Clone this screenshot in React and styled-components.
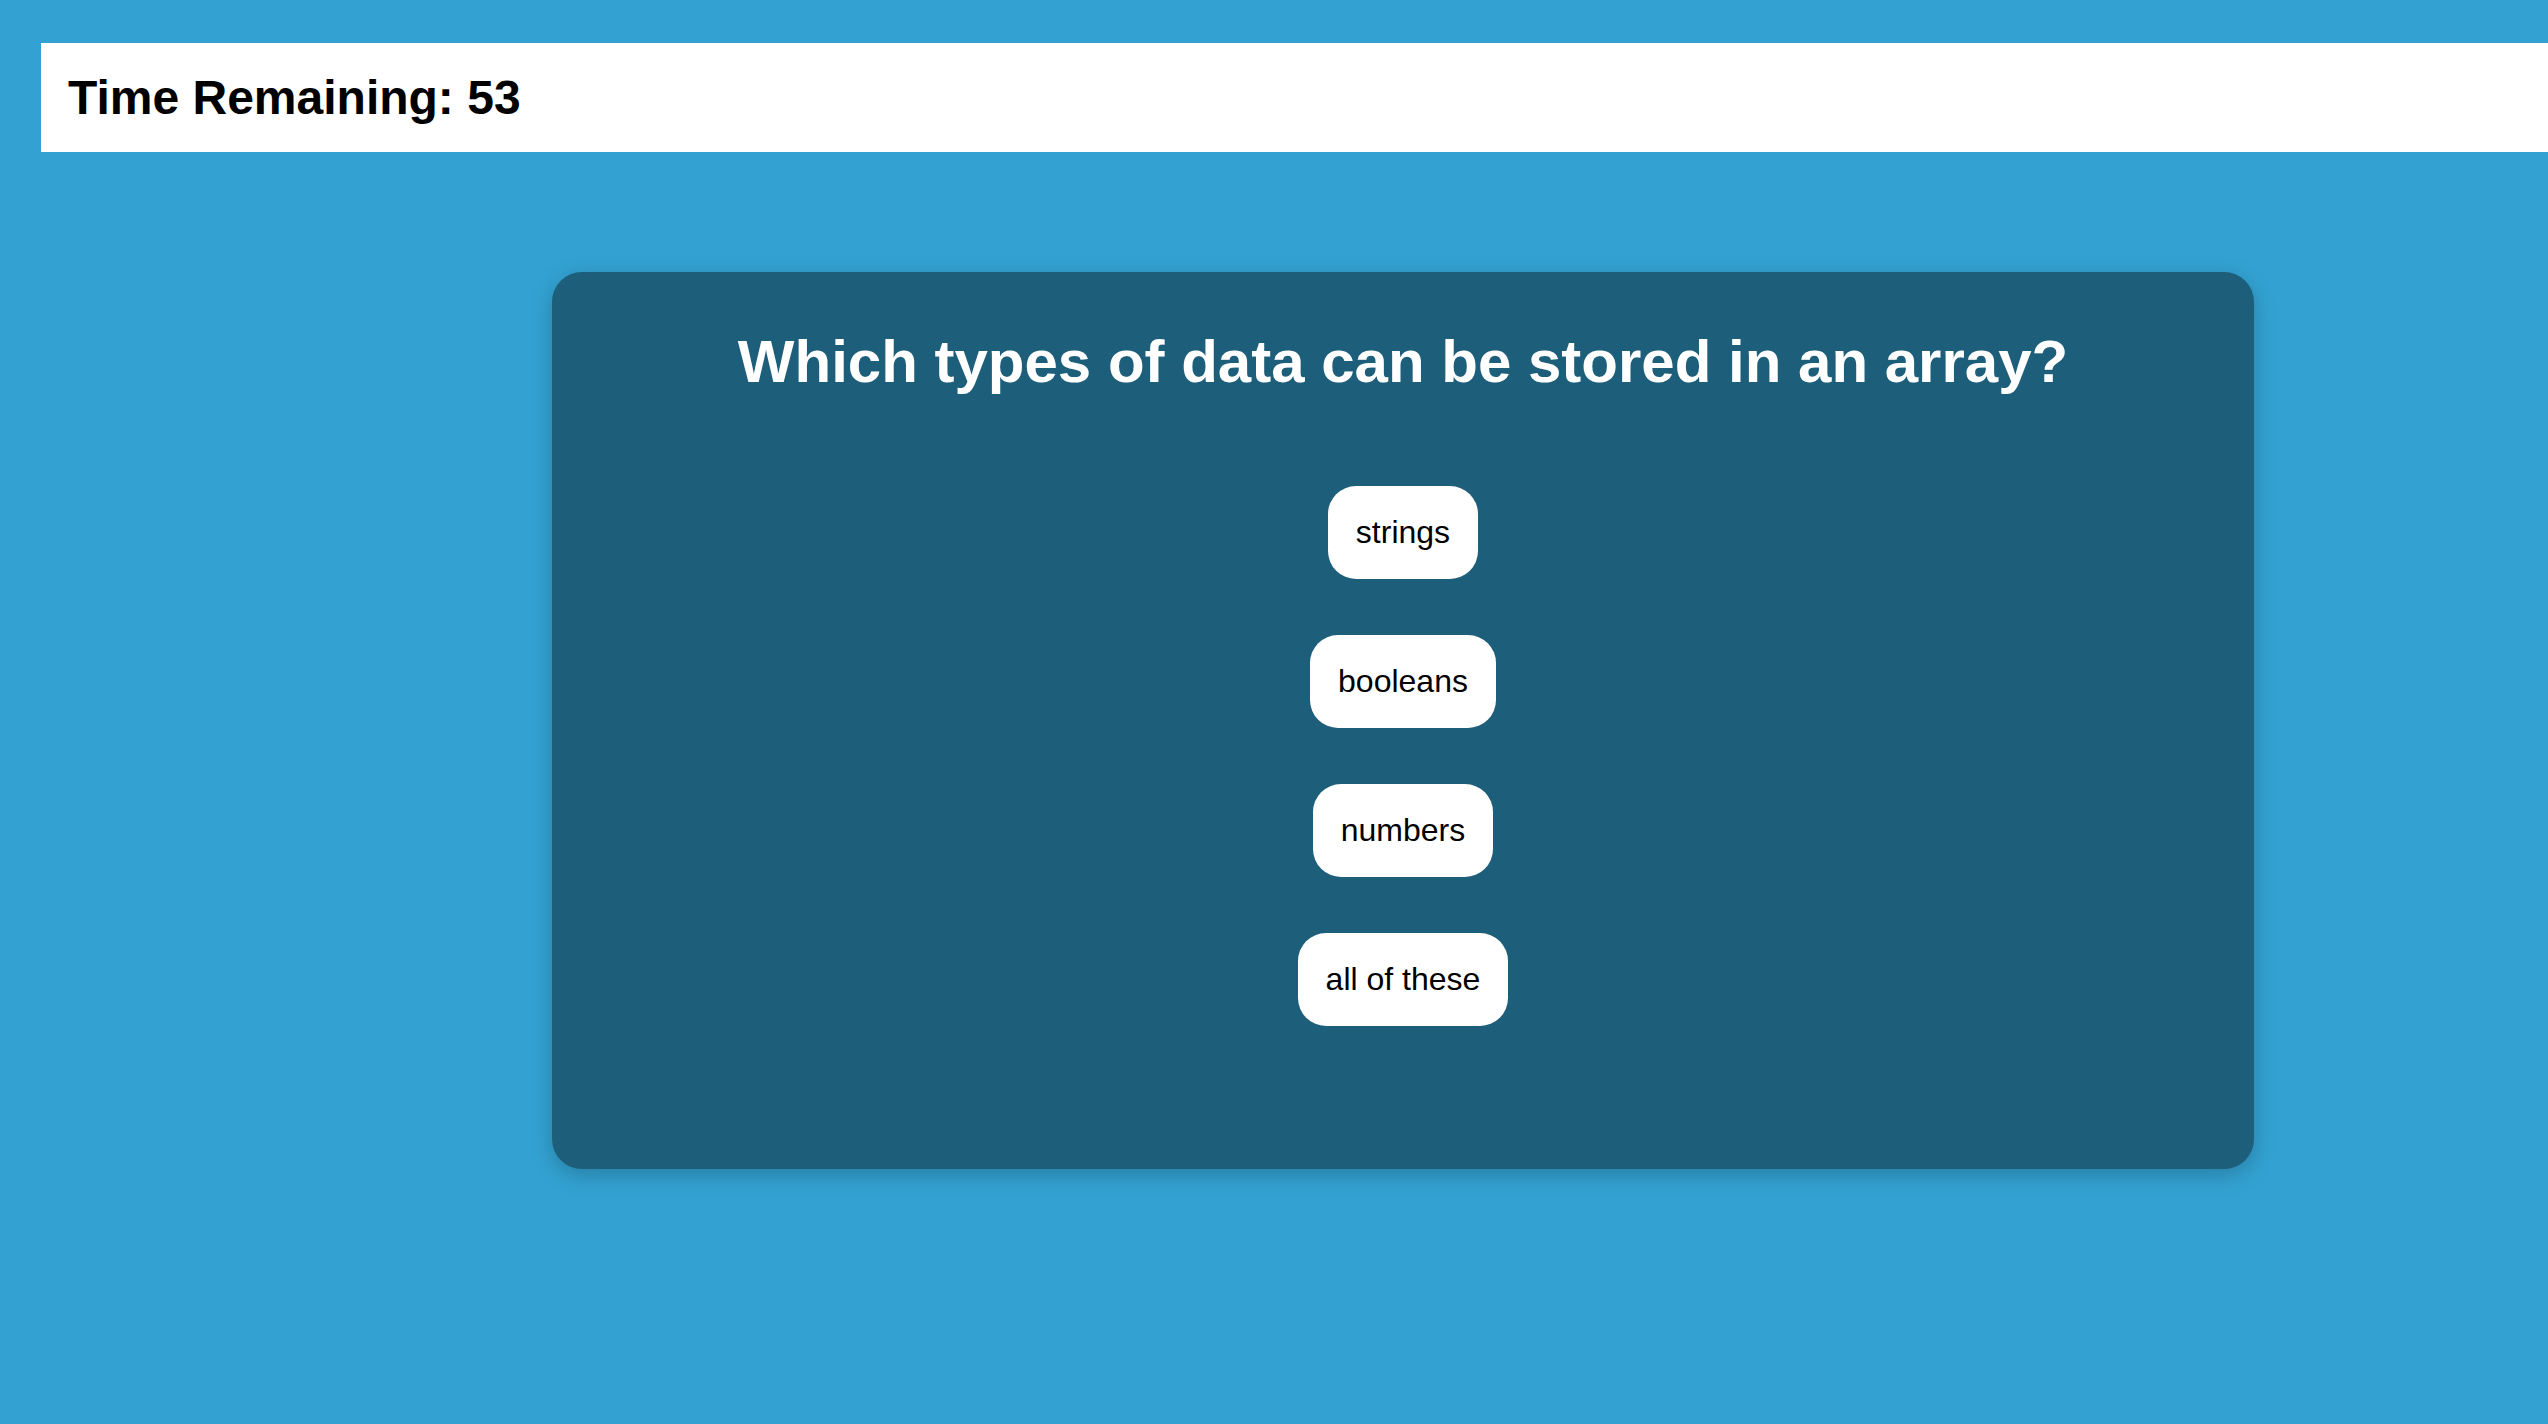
import React from "react";
import styled, { createGlobalStyle } from "styled-components";

const GlobalStyle = createGlobalStyle`
  html, body {
    margin: 0;
    padding: 0;
    background: #33a2d2;
    font-family: "Liberation Sans", Arial, sans-serif;
    overflow: hidden;
  }
`;

const Page = styled.div`
  min-height: 1424px;
  padding-top: 43px;
  box-sizing: border-box;
  display: flex;
  flex-direction: column;
`;

const TimerBar = styled.header`
  margin-left: 41px;
  background: #ffffff;
  height: 109px;
  box-sizing: border-box;
  padding: 0 27px;
  display: flex;
  align-items: center;
`;

const TimerText = styled.h2`
  margin: 0;
  font-size: 48px;
  font-weight: 700;
  color: #000000;
  line-height: normal;
`;

const Card = styled.main`
  margin: 120px 0 0 552px;
  width: 1702px;
  height: 897px;
  box-sizing: border-box;
  background: #1d5e7a;
  border-radius: 30px;
  box-shadow: 0 6px 22px rgba(0, 0, 0, 0.22);
  padding: 55px 40px 0;
  display: flex;
  flex-direction: column;
  align-items: center;
`;

const Question = styled.h1`
  margin: 0 0 90px;
  font-size: 60px;
  font-weight: 700;
  color: #ffffff;
  line-height: normal;
  text-align: center;
`;

const Choices = styled.div`
  display: flex;
  flex-direction: column;
  align-items: center;
  gap: 56px;
`;

const Choice = styled.button`
  font-family: "Liberation Sans", Arial, sans-serif;
  font-size: 32px;
  color: #000000;
  background: #ffffff;
  border: none;
  border-radius: 28px;
  padding: 28px;
  line-height: normal;
  cursor: pointer;
`;

const choices = ["strings", "booleans", "numbers", "all of these"];

export default function App() {
  return (
    <>
      <GlobalStyle />
      <Page>
        <TimerBar>
          <TimerText>Time Remaining: 53</TimerText>
        </TimerBar>
        <Card>
          <Question>Which types of data can be stored in an array?</Question>
          <Choices>
            {choices.map((c) => (
              <Choice key={c}>{c}</Choice>
            ))}
          </Choices>
        </Card>
      </Page>
    </>
  );
}
